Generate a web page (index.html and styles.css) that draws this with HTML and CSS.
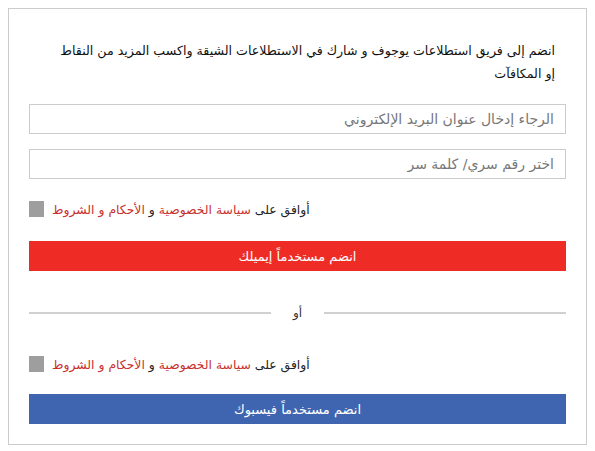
FILE: index.html
```html
<!DOCTYPE html>
<html lang="ar">
<head>
    <meta charset="UTF-8">
    <meta name="viewport" content="width=device-width, initial-scale=1.0">
    <title>انضم إلى فريق استطلاعات يوجوف</title>
    <link rel="stylesheet" href="styles.css">
</head>
<body>
    <div class="signup-box">
        <!-- Intro text -->
        <p class="intro" dir="rtl">انضم إلى فريق استطلاعات يوجوف و شارك في الاستطلاعات الشيقة واكسب المزيد من النقاط إو&nbsp;المكافآت</p>

        <!-- Email signup -->
        <form class="signup-form">
            <input type="email" class="field" dir="rtl" placeholder="الرجاء إدخال عنوان البريد الإلكتروني">
            <input type="password" class="field" dir="rtl" placeholder="اختر رقم سري/ كلمة سر">
            <div class="agree-row">
                <input type="checkbox" id="agreeEmail" class="agree-box">
                <label for="agreeEmail" dir="rtl">أوافق على <a href="#">سياسة الخصوصية</a> و <a href="#">الأحكام و الشروط</a></label>
            </div>
            <button type="button" class="btn btn-email">انضم مستخدماً إيميلك</button>
        </form>

        <!-- Divider -->
        <div class="divider">
            <span class="divider-line"></span>
            <span class="divider-text">أو</span>
            <span class="divider-line"></span>
        </div>

        <!-- Facebook signup -->
        <div class="signup-form fb-form">
            <div class="agree-row">
                <input type="checkbox" id="agreeFb" class="agree-box">
                <label for="agreeFb" dir="rtl">أوافق على <a href="#">سياسة الخصوصية</a> و <a href="#">الأحكام و الشروط</a></label>
            </div>
            <button type="button" class="btn btn-fb">انضم مستخدماً فيسبوك</button>
        </div>
    </div>
</body>
</html>
```

FILE: styles.css
```css
/* Base */
body {
    margin: 8px;
    font-family: "DejaVu Sans", sans-serif;
    background-color: #fff;
    color: #222;
}

.signup-box {
    border: 1px solid #ccc;
    padding: 20px;
}

.intro {
    margin: 10px 0 19px;
    padding: 0 11px 0 0;
    font-size: 12.6px;
    line-height: 23px;
    color: #111;
    text-align: right;
}

/* Form */
.signup-form {
    display: flex;
    flex-direction: column;
}

.field {
    height: 30px;
    margin-bottom: 15px;
    padding: 0 11px;
    border: 1px solid #ccc;
    font-family: inherit;
    font-size: 14px;
    color: #333;
    box-sizing: border-box;
}

.field::placeholder {
    color: #777;
}

.agree-row {
    display: flex;
    align-items: center;
    gap: 8px;
    height: 16px;
    margin: 7px 0 24px;
    font-size: 12.4px;
    color: #222;
}

.agree-box {
    appearance: none;
    width: 15px;
    height: 16px;
    margin: 0;
    background-color: #9e9e9e;
    border: none;
}

.agree-row a {
    color: #c9302c;
    text-decoration: none;
}

.btn {
    height: 30px;
    border: none;
    font-family: inherit;
    font-size: 13px;
    color: #fff;
    cursor: pointer;
}

.btn-email {
    background-color: #ee2b25;
}

.btn-fb {
    background-color: #3f65b1;
}

/* "or" divider */
.divider {
    display: flex;
    align-items: center;
    height: 20px;
    margin: 32px 0 0;
}

.divider-line {
    flex: 1;
    height: 2px;
    background-color: #d0d0d0;
}

.divider-text {
    width: 53px;
    text-align: center;
    font-size: 12px;
    color: #333;
}

.fb-form .agree-row {
    margin-top: 33px;
    margin-bottom: 22px;
}
```
